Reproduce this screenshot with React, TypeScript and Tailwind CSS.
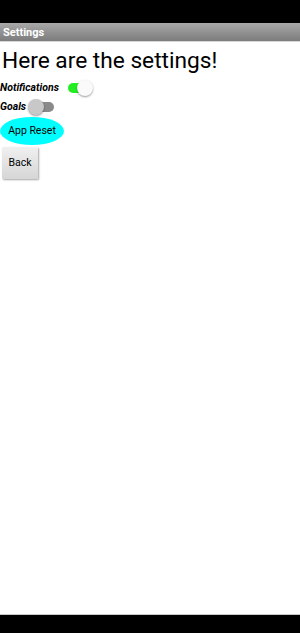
import React from "react";

export default function App() {
  return (
    <div className="w-[300px] h-[633px] flex flex-col bg-white" style={{ fontFamily: "Roboto, 'Liberation Sans', sans-serif" }}>
      <div className="h-[23px] bg-black shrink-0" />
      <div className="h-[19px] shrink-0 bg-gradient-to-b from-[#a8a8a8] to-[#7c7c7c] flex items-center px-[3px] border-b border-[#d8d8d8]">
        <span className="text-white font-bold text-[11px] leading-none">Settings</span>
      </div>
      <div className="flex-1 flex flex-col items-start">
        <div className="text-[22.7px] leading-[28px] text-black px-[2px] mt-[5px]">Here are the settings!</div>
        <div className="flex items-center mt-[4px] h-[18px]">
          <span className="italic font-bold text-[10.5px] text-black">Notifications</span>
          <div className="relative ml-[9px] w-[26px] h-[18px]">
            <div className="absolute left-0 top-[4px] w-[22px] h-[10px] rounded-full bg-[#22ee22]" />
            <div className="absolute left-[9px] top-[1px] w-[16px] h-[16px] rounded-full bg-[#fafafa] shadow-[0_1px_2px_rgba(0,0,0,0.4)]" />
          </div>
        </div>
        <div className="flex items-center mt-[1px] h-[18px]">
          <span className="italic font-bold text-[10.5px] text-black">Goals</span>
          <div className="relative ml-[2px] w-[26px] h-[18px]">
            <div className="absolute left-[4px] top-[4px] w-[22px] h-[10px] rounded-full bg-[#8a8a8a]" />
            <div className="absolute left-0 top-[1px] w-[16px] h-[16px] rounded-full bg-[#c8c8c8] shadow-[0_1px_2px_rgba(0,0,0,0.4)]" />
          </div>
        </div>
        <div className="mt-[1px] w-[64px] h-[28px] rounded-[50%] bg-[#00ffff] flex items-center justify-center text-[10.5px] text-black">
          App Reset
        </div>
        <div className="ml-[2px] mt-[2px] w-[36px] h-[32px] bg-gradient-to-b from-[#f0f0f0] to-[#d6d6d6] shadow-[1px_1px_2px_rgba(0,0,0,0.35)] flex items-center justify-center text-[10.5px] text-black rounded-[1px]">
          Back
        </div>
      </div>
      <div className="h-[1px] bg-[#c8c8c8] shrink-0" />
      <div className="h-[18px] bg-black shrink-0" />
    </div>
  );
}
